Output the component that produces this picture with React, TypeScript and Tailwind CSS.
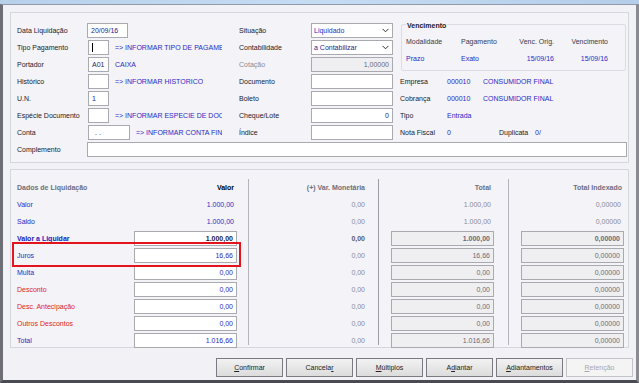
import { ReactNode } from "react";

const FONT = "font-['Liberation_Sans',Arial,sans-serif]";

const Box = ({ w, children, right, gray, bold, className }: { w: string; children?: ReactNode; right?: boolean; gray?: boolean; bold?: boolean; className?: string }) => (
  <div
    className={`${w} shrink-0 h-[15px] border border-[#a9a9b0] flex items-center px-[3px] whitespace-nowrap overflow-hidden ${right ? "justify-end" : ""} ${gray ? "bg-[#efeff1] text-[#6a6a78]" : "bg-white"} ${bold ? "font-bold" : ""} ${className ?? ""}`}
  >
    {children}
  </div>
);

// o texto de ajuda é cortado na borda da coluna, como no sistema
const Hint = ({ children }: { children: ReactNode }) => (
  <span className="min-w-0 overflow-hidden text-clip text-[#2b2bc4] ml-[6px]">{children}</span>
);

const Row = ({ children }: { children: ReactNode }) => (
  <div className="h-[15px] w-full flex items-center whitespace-nowrap">{children}</div>
);

const Lbl = ({ w, children, className }: { w: string; children: ReactNode; className?: string }) => (
  <span className={`${w} shrink-0 ${className ?? ""}`}>{children}</span>
);

const Select = ({ value, color }: { value: string; color: string }) => (
  <div className={`w-[82px] shrink-0 h-[15px] border border-[#a9a9b0] bg-white flex items-center justify-between px-[2px] ${color}`}>
    <span>{value}</span>
    <svg width="7" height="5" viewBox="0 0 7 5" className="mr-[1px]">
      <path d="M0.5 0.8 L3.5 3.8 L6.5 0.8" fill="none" stroke="#333" strokeWidth="1" />
    </svg>
  </div>
);

const buttons = [
  { pre: "", u: "C", post: "onfirmar" },
  { pre: "Cancela", u: "r", post: "" },
  { pre: "", u: "M", post: "últiplos" },
  { pre: "A", u: "d", post: "iantar" },
  { pre: "", u: "A", post: "diantamentos" },
  { pre: "", u: "R", post: "etenção", disabled: true },
];

type LiqRow = { label: string; color: string; valor: string; var: string; total: string; idx: string; input: boolean; bold?: boolean };

const rows: LiqRow[] = [
  { label: "Valor", color: "text-[#2b2bc4]", valor: "1.000,00", var: "0,00", total: "1.000,00", idx: "0,00000", input: false },
  { label: "Saldo", color: "text-[#2b2bc4]", valor: "1.000,00", var: "0,00", total: "1.000,00", idx: "0,00000", input: false },
  { label: "Valor a Liquidar", color: "text-[#1a1ab8]", valor: "1.000,00", var: "0,00", total: "1.000,00", idx: "0,00000", input: true, bold: true },
  { label: "Juros", color: "text-[#2b2bc4]", valor: "16,66", var: "0,00", total: "16,66", idx: "0,00000", input: true },
  { label: "Multa", color: "text-[#2b2bc4]", valor: "0,00", var: "0,00", total: "0,00", idx: "0,00000", input: true },
  { label: "Desconto", color: "text-[#e02424]", valor: "0,00", var: "0,00", total: "0,00", idx: "0,00000", input: true },
  { label: "Desc. Antecipação", color: "text-[#e02424]", valor: "0,00", var: "0,00", total: "0,00", idx: "0,00000", input: true },
  { label: "Outros Descontos", color: "text-[#e02424]", valor: "0,00", var: "0,00", total: "0,00", idx: "0,00000", input: true },
  { label: "Total", color: "text-[#2b2bc4]", valor: "1.016,66", var: "0,00", total: "1.016,66", idx: "0,00000", input: true },
];

const BRow = ({ children, className }: { children: ReactNode; className?: string }) => (
  <div className={`h-[17px] shrink-0 flex items-center whitespace-nowrap ${className ?? ""}`}>{children}</div>
);

export default function App() {
  return (
    <div className={`w-[639px] h-[383px] overflow-hidden bg-[#f1f1f6] text-[7px] leading-none text-[#1a1a2a] flex flex-col ${FONT}`}>
      <div className="h-[4px] bg-gradient-to-r from-[#b8d0ea] via-[#c6dcf3] to-[#b5cde8]" />
      <div className="flex-1 flex flex-col border-t border-[#8c9aab] border-l-[3px] border-l-[#6e6e76] border-r-[3px] border-r-[#8a8a92] border-b-[3px] border-b-[#4a4a52]">
        {/* cabeçalho */}
        <div className="relative mt-[7px] ml-[7px] w-[619px] h-[151px] border border-[#d6d6de] bg-[#f3f3f8] pt-[10px]">
          <div className="flex">
            <div className="w-[211px] shrink-0 pl-[6px] overflow-hidden flex flex-col gap-[2px]">
              <Row><Lbl w="w-[70px]">Data Liquidação</Lbl><Box w="w-[41px]" className="text-[#1d1d8c]">20/09/16</Box></Row>
              <Row><Lbl w="w-[71px]">Tipo Pagamento</Lbl><Box w="w-[21px]"><span className="w-px h-[9px] bg-black" /></Box><Hint>=&gt; INFORMAR TIPO DE PAGAMENTO</Hint></Row>
              <Row><Lbl w="w-[71px]">Portador</Lbl><Box w="w-[21px]" className="text-[#1d1d6c]">A01</Box><span className="ml-[6px] text-[#2b2bc4]">CAIXA</span></Row>
              <Row><Lbl w="w-[71px]">Histórico</Lbl><Box w="w-[21px]" /><Hint>=&gt; INFORMAR HISTORICO</Hint></Row>
              <Row><Lbl w="w-[71px]">U.N.</Lbl><Box w="w-[21px]" className="text-[#1d1d8c]">1</Box></Row>
              <Row><Lbl w="w-[71px]">Espécie Documento</Lbl><Box w="w-[21px]" /><Hint>=&gt; INFORMAR ESPECIE DE DOCUMENTO</Hint></Row>
              <Row><Lbl w="w-[71px]">Conta</Lbl><Box w="w-[42px]" className="pl-[6px]">. .</Box><Hint>=&gt; INFORMAR CONTA FINANCEIRA</Hint></Row>
            </div>
            <div className="ml-[17px] shrink-0 flex flex-col gap-[2px]">
              <Row><Lbl w="w-[72px]">Situação</Lbl><Select value="Liquidado" color="text-[#2b2bc4]" /></Row>
              <Row><Lbl w="w-[72px]">Contabilidade</Lbl><Select value="a Contabilizar" color="text-[#1d1d8c]" /></Row>
              <Row><Lbl w="w-[72px]" className="text-[#8a8a96]">Cotação</Lbl><Box w="w-[82px]" right gray>1,00000</Box></Row>
              <Row><Lbl w="w-[72px]">Documento</Lbl><Box w="w-[82px]" /></Row>
              <Row><Lbl w="w-[72px]">Boleto</Lbl><Box w="w-[82px]" /></Row>
              <Row><Lbl w="w-[72px]">Cheque/Lote</Lbl><Box w="w-[82px]" right className="text-[#1d1d8c]">0</Box></Row>
              <Row><Lbl w="w-[72px]">Índice</Lbl><Box w="w-[82px]" /></Row>
            </div>
            <div className="ml-[7px] shrink-0 flex flex-col">
              <div className="relative w-[225px] h-[47px] mt-[1px] mb-[3px] ml-[1px] border border-[#dcdce4] rounded-[2px] whitespace-nowrap">
                <span className="absolute left-[4px] -top-[3px] px-px bg-[#f3f3f8] font-bold text-[#1a1a2a]">Vencimento</span>
                <div className="flex mt-[13px] text-[#3a3a4a]">
                  <span className="w-[59px] shrink-0 pl-[4px]">Modalidade</span>
                  <span className="w-[58px] shrink-0">Pagamento</span>
                  <span className="w-[35px] shrink-0 text-right">Venc. Orig.</span>
                  <span className="w-[54px] shrink-0 text-right">Vencimento</span>
                </div>
                <div className="flex mt-[10px] text-[#2b2bc4]">
                  <span className="w-[59px] shrink-0 pl-[4px]">Prazo</span>
                  <span className="w-[58px] shrink-0">Exato</span>
                  <span className="w-[35px] shrink-0 text-right">15/09/16</span>
                  <span className="w-[54px] shrink-0 text-right">15/09/16</span>
                </div>
              </div>
              <div className="flex flex-col gap-[2px]">
                <Row><Lbl w="w-[47px]">Empresa</Lbl><Lbl w="w-[36px]" className="text-[#2b2bc4]">000010</Lbl><span className="text-[#2b2bc4]">CONSUMIDOR FINAL</span></Row>
                <Row><Lbl w="w-[47px]">Cobrança</Lbl><Lbl w="w-[36px]" className="text-[#2b2bc4]">000010</Lbl><span className="text-[#2b2bc4]">CONSUMIDOR FINAL</span></Row>
                <Row><Lbl w="w-[47px]">Tipo</Lbl><span className="text-[#2b2bc4]">Entrada</span></Row>
                <Row><Lbl w="w-[47px]">Nota Fiscal</Lbl><Lbl w="w-[52px]" className="text-[#2b2bc4]">0</Lbl><Lbl w="w-[36px]">Duplicata</Lbl><span className="text-[#2b2bc4]">0/</span></Row>
              </div>
            </div>
          </div>
          <div className="mt-[2px] pl-[6px]">
            <Row><Lbl w="w-[70px]">Complemento</Lbl><Box w="w-[540px]" /></Row>
          </div>
        </div>

        {/* liquidação */}
        <div className="relative mt-[6px] ml-[7px] w-[619px] h-[179px] border border-[#d6d6de] bg-[#f3f3f8] pt-[9px] flex">
          <div className="w-[237px] shrink-0 pl-[6px] pr-[11px] flex flex-col">
            <BRow className="justify-between font-bold">
              <span className="text-[#6e6e7c]">Dados de Liquidação</span>
              <span className="text-black mr-[3px]">Valor</span>
            </BRow>
            {rows.map(r => (
              <BRow key={r.label} className="justify-between">
                <span className={`${r.color} ${r.bold ? "font-bold" : ""}`}>{r.label}</span>
                {r.input
                  ? <Box w="w-[103px]" right bold={r.bold} className={r.bold ? "text-[#1a1a40]" : "text-[#2b2bc4]"}>{r.valor}</Box>
                  : <span className="text-[#2b2bc4] mr-[3px]">{r.valor}</span>}
              </BRow>
            ))}
          </div>
          <div className="w-[130px] shrink-0 h-[166px] border-l border-[#b4b4bc] pr-[13px] flex flex-col items-end">
            <BRow className="font-bold text-[#6e6e7c]">(+) Var. Monetária</BRow>
            {rows.map(r => (
              <BRow key={r.label} className={r.bold ? "font-bold text-[#5a5a66]" : "text-[#8a8a96]"}>{r.var}</BRow>
            ))}
          </div>
          <div className="w-[130px] shrink-0 h-[166px] border-l border-[#9c9ca4] pl-[12px] flex flex-col">
            <BRow className="justify-end font-bold text-[#6e6e7c] w-[103px] pr-[3px]">Total</BRow>
            {rows.map(r => (
              <BRow key={r.label}>
                {r.input
                  ? <Box w="w-[103px]" right gray bold={r.bold} className={r.bold ? "text-[#3a3a48]" : ""}>{r.total}</Box>
                  : <span className="w-[103px] text-right pr-[3px] text-[#8a8a96]">{r.total}</span>}
              </BRow>
            ))}
          </div>
          <div className="w-[119px] shrink-0 h-[166px] border-l border-[#b4b4bc] pl-[12px] flex flex-col">
            <BRow className="justify-end font-bold text-[#6e6e7c] w-[103px] pr-[2px]">Total Indexado</BRow>
            {rows.map(r => (
              <BRow key={r.label}>
                {r.input
                  ? <Box w="w-[103px]" right gray bold={r.bold} className={r.bold ? "text-[#3a3a48]" : ""}>{r.idx}</Box>
                  : <span className="w-[103px] text-right pr-[3px] text-[#8a8a96]">{r.idx}</span>}
              </BRow>
            ))}
          </div>
          <div className="absolute left-[1px] top-[72px] w-[229px] h-[25px] border-2 border-[#e3141b]" />
        </div>

        {/* botões */}
        <div className="mt-[10px] pr-[3px] flex justify-end gap-[3px]">
          {buttons.map(b => (
            <div
              key={b.post + b.u}
              className={`w-[67px] h-[19px] flex items-center justify-center border ${b.disabled ? "border-[#c4c4c8] bg-[#f4f4f4] text-[#a8a8ae]" : "border-[#7a7a80] bg-gradient-to-b from-[#f2f2f2] to-[#dcdcdc] text-[#222]"}`}
            >
              <span>{b.pre}<span className="underline">{b.u}</span>{b.post}</span>
            </div>
          ))}
        </div>
      </div>
    </div>
  );
}
